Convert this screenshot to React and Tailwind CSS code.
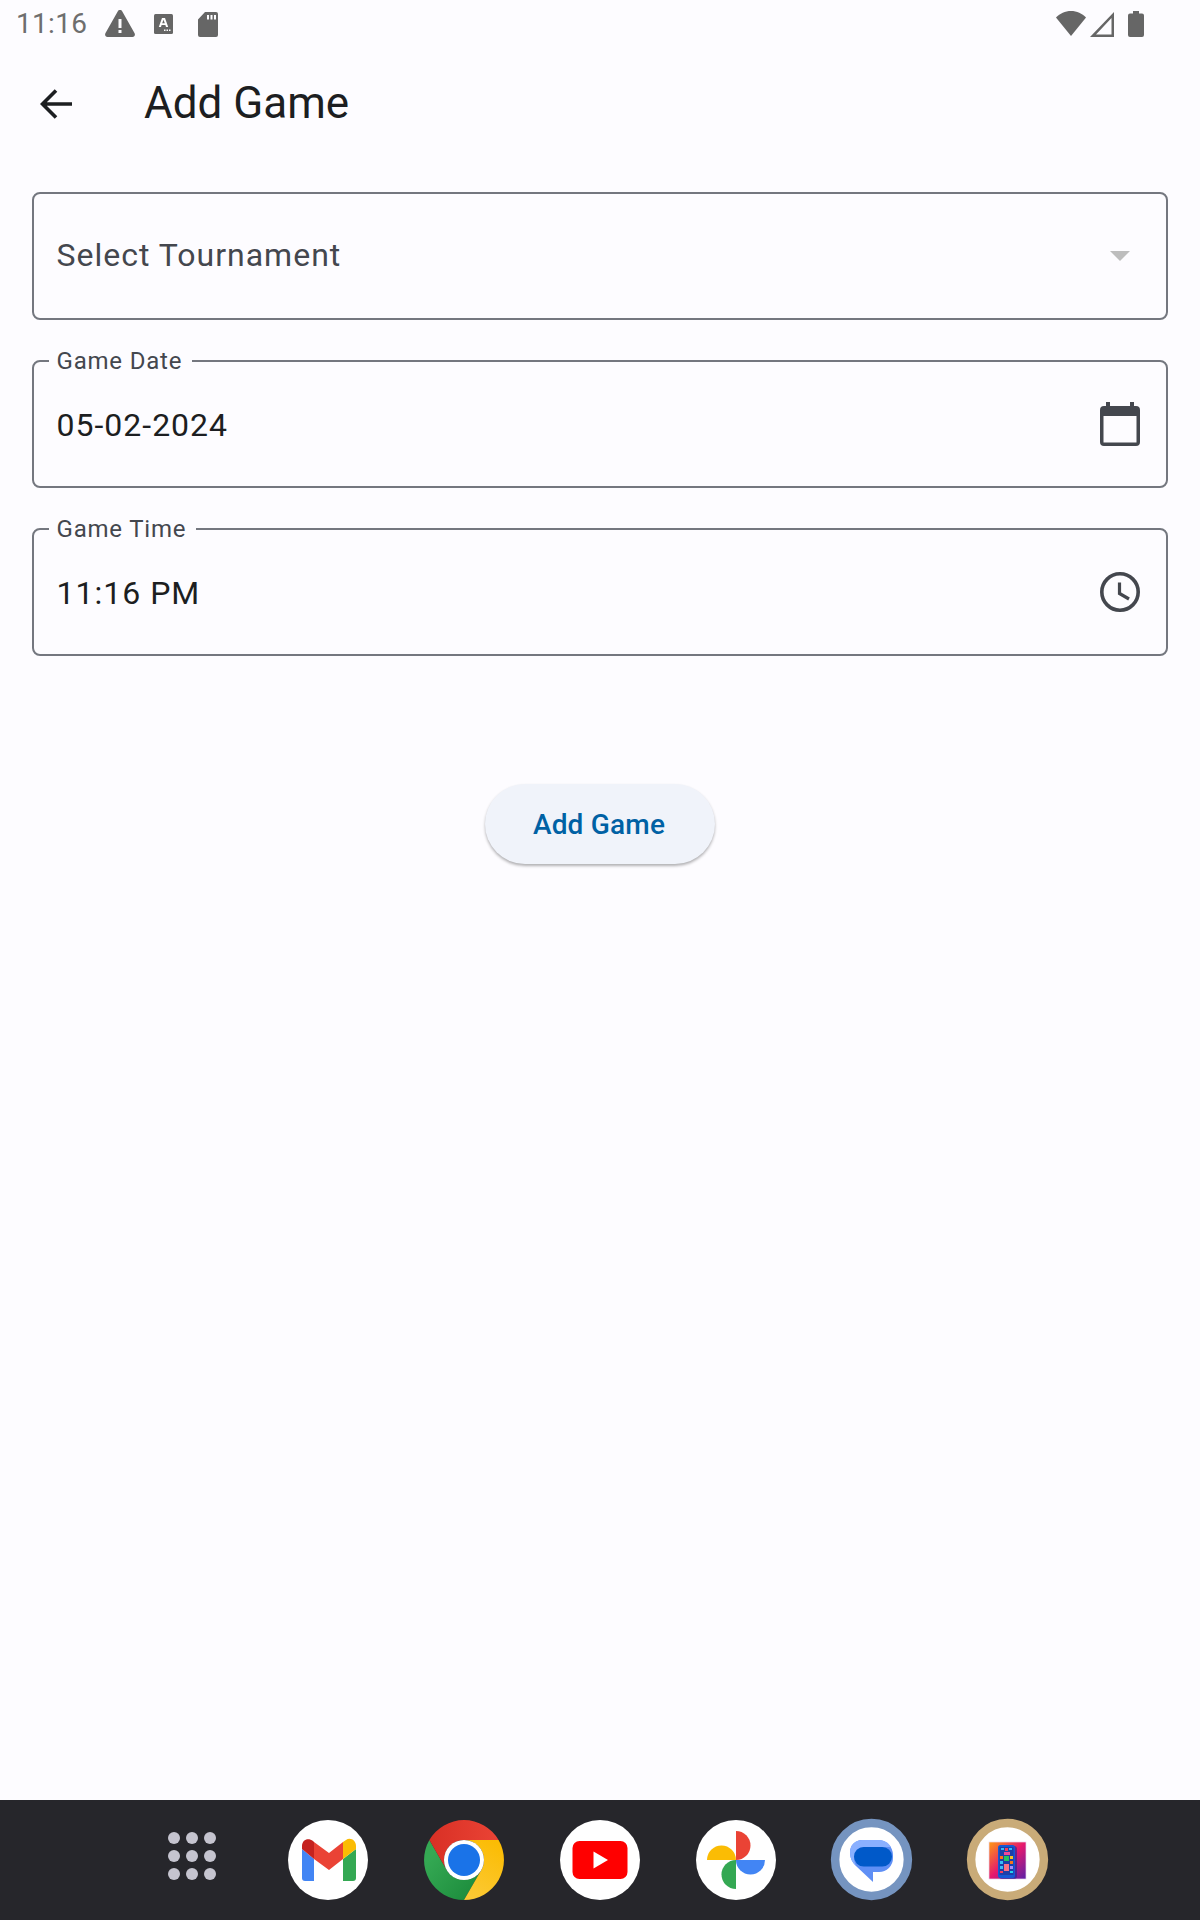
import React from "react";

const font = { fontFamily: "Roboto, sans-serif" };

function Field({ label, value, icon, muted }) {
  return (
    <div className="relative flex h-32 items-center justify-between rounded-lg border-2 border-[#74777f] pl-[22.5px] pr-[26px]">
      {label && (
        <span className="absolute left-[14.5px] -top-px -translate-y-1/2 bg-[#fdfcff] pl-2 pr-[10px] text-[24px] leading-8 tracking-[0.8px] text-[#44474e]">
          {label}
        </span>
      )}
      <span className={`text-[32px] leading-10 tracking-[1px] ${muted ? "mb-[2px] text-[#44474e]" : "mt-[2px] text-[#1c1e21]"}`}>{value}</span>
      {icon}
    </div>
  );
}

const Caret = () => (
  <svg viewBox="0 0 40 40" className="h-10 w-10">
    <path d="M10 15h20L20 25z" fill="#bdbdbd" />
  </svg>
);
const Calendar = () => (
  <svg viewBox="0 0 40 44" className="h-11 w-10">
    <path fill="#44474e" d="M6 0h4v4h20V0h4v4h2a4 4 0 0 1 4 4v32a4 4 0 0 1-4 4H4a4 4 0 0 1-4-4V8a4 4 0 0 1 4-4h2zM3.500 14v26.500h33V14z" fillRule="evenodd" />
  </svg>
);
const Clock = () => (
  <svg viewBox="0 0 40 40" className="h-10 w-10" fill="none" stroke="#44474e">
    <circle cx="20" cy="20" r="18.200" strokeWidth="3.600" />
    <path d="M19.500 10.500V21.500L29 27" strokeWidth="3.200" />
  </svg>
);

const Gmail = () => (
  <svg viewBox="0 0 80 80" className="h-20 w-20">
    <circle cx="40" cy="40" r="40" fill="#fff" />
    <path fill="#4285f4" d="M14 29l12 10v22h-9a3 3 0 0 1-3-3z" />
    <path fill="#34a853" d="M55 39l13-10v29a3 3 0 0 1-3 3H55z" />
    <path fill="#ea4335" d="M26 22l15 11 14-11v17L41 50 26 39z" />
    <path fill="#c5221f" d="M14 26c0-6 6-9 11-5l1 1v17L14 29z" />
    <path fill="#fbbc04" d="M55 22l3-2c4-3 10 0 10 6v3L55 39z" />
  </svg>
);
const Chrome = () => (
  <svg viewBox="0 0 80 80" className="h-20 w-20">
    <defs>
      <linearGradient id="cr" x1="0" y1="0.500" x2="1" y2="0.500">
        <stop offset="0" stopColor="#d93025" />
        <stop offset="1" stopColor="#ea4335" />
      </linearGradient>
      <linearGradient id="cg" x1="0.800" y1="0.900" x2="0.100" y2="0.300">
        <stop offset="0" stopColor="#1e8e3e" />
        <stop offset="1" stopColor="#34a853" />
      </linearGradient>
      <linearGradient id="cy" x1="0.300" y1="1" x2="0.700" y2="0">
        <stop offset="0" stopColor="#fcc934" />
        <stop offset="1" stopColor="#fbbc04" />
      </linearGradient>
    </defs>
    <path fill="url(#cg)" d="M40 80A40 40 0 0 1 5.400 20L22.700 50A20 20 0 0 0 57.300 50z" />
    <path fill="url(#cy)" d="M74.600 20A40 40 0 0 1 40 80L57.300 50A20 20 0 0 0 40 20z" />
    <path fill="url(#cr)" d="M5.400 20A40 40 0 0 1 74.600 20H40A20 20 0 0 0 22.700 50z" />
    <circle cx="40" cy="40" r="20" fill="#fff" />
    <circle cx="40" cy="40" r="16" fill="#1a73e8" />
  </svg>
);
const YouTube = () => (
  <svg viewBox="0 0 80 80" className="h-20 w-20">
    <circle cx="40" cy="40" r="40" fill="#fff" />
    <rect x="12.500" y="21" width="55" height="38" rx="7" fill="#ff0000" />
    <path d="M33.500 31.500L48 40l-14.500 8.500z" fill="#fff" />
  </svg>
);
const Photos = () => (
  <svg viewBox="0 0 80 80" className="h-20 w-20">
    <circle cx="40" cy="40" r="40" fill="#fff" />
    <path fill="#ea4335" d="M40 11a14.500 14.500 0 0 1 0 29z" />
    <path fill="#fbbc04" d="M11 40a14.500 14.500 0 0 1 29 0z" />
    <path fill="#4285f4" d="M40 40h29a14.500 14.500 0 0 1-29 0z" />
    <path fill="#34a853" d="M40 40v29a14.500 14.500 0 0 1 0-29z" />
  </svg>
);
const Messages = () => (
  <svg viewBox="0 0 80 80" className="h-20 w-20 overflow-visible">
    <circle cx="39.500" cy="39.500" r="36.400" fill="#fff" stroke="#7594c0" strokeWidth="8.500" />
    <path fill="#5f8ff5" d="M30 20h16a15 15 0 0 1 15 15v3a14 14 0 0 1-14 14h-6v10L24 46c-3-3-6-7-6-14a12 12 0 0 1 12-12z" />
    <path fill="#8ab0ff" d="M30 20h16c6 0 10 2 13 7H32a10 10 0 0 0-10 10c0 4 1 6 2 9-3-3-6-7-6-14a12 12 0 0 1 12-12z" />
    <rect x="22" y="27" width="38" height="19.500" rx="9.700" fill="#0059c9" />
  </svg>
);
const AppArt = () => (
  <svg viewBox="0 0 80 80" className="h-20 w-20 overflow-visible">
    <defs>
      <linearGradient id="art" x1="0" y1="0" x2="1" y2="1">
        <stop offset="0" stopColor="#ff9a12" />
        <stop offset="0.500" stopColor="#e5186e" />
        <stop offset="1" stopColor="#5a1fa8" />
      </linearGradient>
    </defs>
    <circle cx="39.500" cy="39.500" r="36.400" fill="#fff" stroke="#c9ab78" strokeWidth="8.500" />
    <rect x="21" y="22" width="37" height="37" fill="url(#art)" stroke="#e9d5ee" strokeWidth="0.700" />
    <rect x="31" y="26" width="18" height="33" rx="3" fill="#162c9e" opacity="0.600" />
    <rect x="30" y="25" width="17" height="33" rx="2.500" fill="#1458d6" />
    <rect x="31.500" y="27" width="14" height="28" fill="#1d3fa8" />
    <rect x="33" y="28" width="3" height="2" fill="#38bdf8" />
    <rect x="37" y="28" width="3" height="3" fill="#f43f5e" />
    <rect x="41" y="28" width="3" height="2" fill="#38bdf8" />
    <rect x="36" y="32" width="6" height="3" fill="#ec4899" />
    <rect x="32" y="36" width="3" height="3" fill="#f97316" />
    <rect x="36" y="36" width="5" height="5" fill="#22c55e" />
    <rect x="42" y="36" width="3" height="3" fill="#fbbf24" />
    <rect x="32" y="41" width="3" height="3" fill="#38bdf8" />
    <rect x="42" y="41" width="3" height="3" fill="#f97316" />
    <rect x="36" y="44" width="5" height="7" fill="#fb7185" />
    <rect x="32" y="46" width="3" height="3" fill="#38bdf8" />
    <rect x="42" y="46" width="3" height="3" fill="#a78bfa" />
    <rect x="32" y="51" width="3" height="2" fill="#f43f5e" />
    <rect x="42" y="51" width="3" height="2" fill="#22d3ee" />
  </svg>
);

export default function App() {
  return (
    <div className="flex h-[1920px] w-[1200px] flex-col bg-[#fdfcff]" style={font}>
      <div className="flex h-12 items-center justify-between pl-[16px] pr-[56px] text-[#666666]">
        <div className="flex items-center">
          <span className="text-[28px] leading-8 tracking-[0.3px] text-[#6e6e6e]">11:16</span>
          <svg viewBox="0 0 30 27" className="ml-[18px] mb-[2px] h-[27px] w-[30px]">
            <path fill="#666666" fillRule="evenodd" d="M15 0c1 0 1.800.5 2.300 1.400l12.300 21.800c.9 1.700-.2 3.800-2.100 3.800H2.500C.6 27-.5 24.900.4 23.200L12.700 1.400C13.200.5 14 0 15 0zm-1.500 9v9h3V9zm0 11v3h3v-3z" />
          </svg>
          <svg viewBox="0 0 19 20" className="ml-[19px] mb-[1px] h-5 w-[19px]">
            <rect width="19" height="20" rx="1.500" fill="#666666" />
            <path fill="#fff" d="M8 4h3l3.200 9h-2.200l-.6-2H7.600L7 13H4.800zm.2 5.300h2.600L9.500 5.700z" fillRule="evenodd" />
            <path fill="#fff" d="M10 15.500h1.500V17H10zm2.500 0H14V17h-1.500zm2.500 0h1.500V17H15z" />
          </svg>
          <svg viewBox="0 0 20 25" className="ml-[25px] h-[25px] w-5">
            <path fill="#666666" fillRule="evenodd" d="M7 0h11a2 2 0 0 1 2 2v21a2 2 0 0 1-2 2H2a2 2 0 0 1-2-2V7.500zm2 3v4.500h2V3zm3.500 0v4.500h2V3zM16 3v4.500h2V3z" />
          </svg>
        </div>
        <div className="flex items-center">
          <svg viewBox="0 0 30 25" className="mb-[1px] h-[25px] w-[30px]">
            <path fill="#666666" d="M0 6.500C4 2.500 9 0 15 0s11 2.500 15 6.500L15 25z" />
          </svg>
          <svg viewBox="0 0 24 25" className="ml-[4px] h-[25px] w-6">
            <path fill="#666666" fillRule="evenodd" d="M24 0v25H0zM21.500 6L6 22.500h15.500z" />
          </svg>
          <svg viewBox="0 0 16 26" className="ml-[14px] h-[26px] w-4">
            <path fill="#666666" d="M5 0h6v2.500h3a2 2 0 0 1 2 2V24a2 2 0 0 1-2 2H2a2 2 0 0 1-2-2V4.500a2 2 0 0 1 2-2h3z" />
          </svg>
        </div>
      </div>

      <div className="flex h-28 items-center pl-10">
        <svg viewBox="0 0 32 30" className="h-[30px] w-8">
          <path d="M32 15H3M16 1.500L2.500 15 16 28.500" fill="none" stroke="#1c1e21" strokeWidth="3.600" />
        </svg>
        <span className="mb-[2px] ml-[72px] text-[44px] leading-[56px] text-[#1c1e21]">Add Game</span>
      </div>

      <div className="flex flex-col gap-10 px-8 pt-8">
        <Field value="Select Tournament" muted icon={<Caret />} />
        <Field label="Game Date" value="05-02-2024" icon={<Calendar />} />
        <Field label="Game Time" value="11:16 PM" icon={<Clock />} />
      </div>

      <div className="mt-[128px] flex flex-1 justify-center">
        <button className="h-20 w-[230px] rounded-full bg-[#f0f3fa] pr-[2px] pt-[2px] text-[28px] font-medium tracking-[0.2px] text-[#0061a4] shadow-[0_2px_3px_rgba(0,0,0,0.3)]">
          Add Game
        </button>
      </div>

      <div className="flex h-[120px] items-center justify-center gap-14 bg-[#26262b]">
        <div className="grid h-20 w-20 grid-cols-3 content-center justify-items-center gap-y-[6px] px-[13px] pb-2">
          {Array.from({ length: 9 }).map((_, i) => (
            <span key={i} className="h-3 w-3 rounded-full bg-[#c5c4cf]" />
          ))}
        </div>
        <Gmail />
        <Chrome />
        <YouTube />
        <Photos />
        <Messages />
        <AppArt />
      </div>
    </div>
  );
}
